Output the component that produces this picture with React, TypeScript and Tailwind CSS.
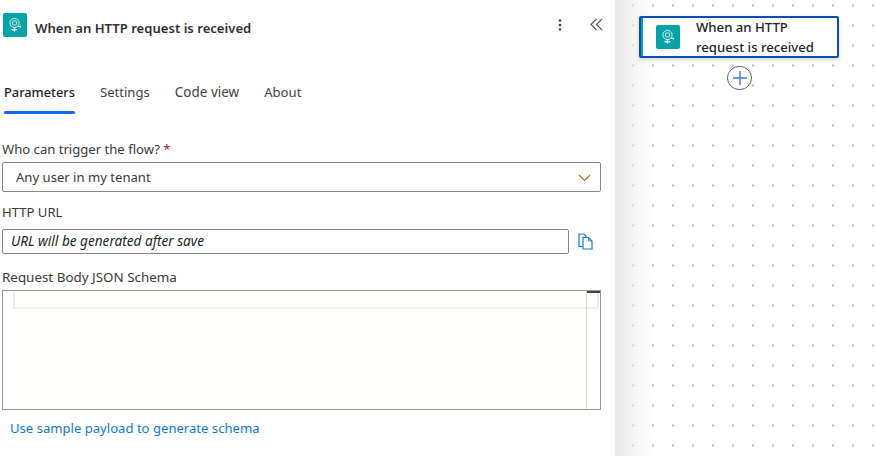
function TriggerIcon({ className }: { className: string }) {
  return (
    <div className={`flex items-center justify-center rounded-[2px] bg-[#04a3a7] ${className}`}>
      <svg width="16" height="16" viewBox="0 0 16 16" fill="none" stroke="#d8f2f2" strokeWidth="1">
        <circle cx="7.5" cy="6" r="4.6" />
        <rect x="5.6" y="4" width="3.8" height="4" rx="0.6" />
        <path d="M10.5 9.5h3.5M12.8 8.4l1.3 1.1-1.3 1.1" />
        <path d="M7.5 10.5v4M4.5 12.8h6" strokeWidth="1.4" />
      </svg>
    </div>
  );
}

function Tab({ label, active, wide }: { label: string; active?: boolean; wide?: boolean }) {
  return (
    <div className={`relative h-[46px] pt-[14px] leading-[20px] ${active ? "text-[12.8px] font-medium text-[#242424]" : wide ? "text-[13.5px] text-[#424242]" : "text-[13.1px] text-[#424242]"}`}>
      {label}
      {active && <div className="absolute bottom-0 left-0 right-0 h-[3px] rounded-[2px] bg-[#0f6cf0]" />}
    </div>
  );
}

export default function App() {
  return (
    <div className="flex h-[456px] w-[875px] overflow-hidden bg-white font-['Noto_Sans','Open_Sans',sans-serif] text-[13.1px] text-[#3b3a39]">
      <div className="flex w-[615px] shrink-0 flex-col">
        <div className="flex h-[50px] items-start pl-[3px] pr-[12px] pt-[13px]">
          <TriggerIcon className="h-[24px] w-[24px] shrink-0" />
          <div className="ml-[8px] mt-[4px] flex-1 text-[13.1px] font-semibold leading-[22px] text-[#323130]">When an HTTP request is received</div>
          <svg className="mt-[5px]" width="4" height="14" viewBox="0 0 4 14" fill="#424242">
            <circle cx="2" cy="2.5" r="1.3" />
            <circle cx="2" cy="7" r="1.3" />
            <circle cx="2" cy="11.5" r="1.3" />
          </svg>
          <svg className="ml-[28px] mt-[5px]" width="13" height="13" viewBox="0 0 13 13" fill="none" stroke="#555555" strokeWidth="1.1">
            <path d="M6.5 1 1 6.5 6.5 12" />
            <path d="M12 1 6.5 6.5 12 12" />
          </svg>
        </div>

        <div className="mt-[18px] flex gap-[25px] pl-[4px]">
          <Tab label="Parameters" active />
          <Tab label="Settings" />
          <Tab label="Code view" wide />
          <Tab label="About" />
        </div>

        <div className="mt-[24px] pl-[2px] pr-[14px]">
          <div className="h-[24px] leading-[22px]">
            Who can trigger the flow? <span className="text-[#a4262c]">*</span>
          </div>
          <div className="flex h-[30px] items-center justify-between rounded-[2px] border border-[#8a8886] pl-[13px] pr-[9px] pt-[2px]">
            <span>Any user in my tenant</span>
            <svg width="13" height="8" viewBox="0 0 13 8" fill="none" strokeWidth="1.1">
              <path d="M1 1l5.5 5.5L12 1" stroke="#b5692a" />
            </svg>
          </div>

          <div className="mt-[10px] h-[27px] leading-[20px]">HTTP URL</div>
          <div className="flex items-center">
            <div className="flex h-[25px] w-[567px] items-center rounded-[2px] border border-[#8a8886] pl-[8px] text-[13.6px] italic text-[#201f1e]">
              URL will be generated after save
            </div>
            <svg className="ml-[9px]" width="15" height="17" viewBox="0 0 15 17" fill="none" stroke="#0f78d4" strokeWidth="1.2">
              <path d="M5 13.5H1V1h5l2 2v1" />
              <path d="M5 4.5h5.5l3.5 3.5v8H5z" />
              <path d="M10.5 4.5V8H14" strokeWidth="0.8" />
            </svg>
          </div>

          <div className="mt-[12px] h-[24px] text-[13.4px] leading-[22px]">Request Body JSON Schema</div>
          <div className="relative h-[120px] border border-[#969696] bg-[#fffffd]">
            <div className="ml-[10px] mr-px h-[18px] border-x-2 border-b-2 border-[#efefec]" />
            <div className="absolute bottom-0 right-[13px] top-0 w-px bg-[#d8d8d4]" />
            <div className="absolute right-0 top-0 h-[2px] w-[13px] bg-[#444444]" />
          </div>
          <div className="mt-[8px] pl-[8px] leading-[20px] text-[#0f78d4]">Use sample payload to generate schema</div>
        </div>
      </div>

      <div className="w-[2px] shrink-0 bg-[#ececec]" />

      <div className="relative flex-1 bg-white bg-[radial-gradient(1.2px_0.7px,#bdbdbd_99%,transparent)] bg-[size:20px_20px] bg-[position:6px_-4.5px]">
        <div className="absolute inset-y-0 left-0 w-[36px] bg-[linear-gradient(90deg,#e9e9e9,rgba(255,255,255,0))]" />
        <div className="absolute left-[22px] top-[16px] flex h-[42px] w-[200px] items-center rounded-[2px] border-[2px] border-[#0a4fb0] bg-white shadow-[0_2px_4px_rgba(0,0,0,0.15)]">
          <div className="absolute inset-y-0 left-0 w-[2px] bg-[#04a3a7]" />
          <TriggerIcon className="ml-[15px] h-[24px] w-[24px] shrink-0" />
          <div className="ml-[16px] text-[13.15px] font-medium leading-[20px] text-[#242424]">
            When an HTTP<br />request is received
          </div>
        </div>
        <div className="absolute left-[110px] top-[66px] flex h-[24px] w-[25px] items-center justify-center rounded-full border border-[#616161] bg-white">
          <svg width="14" height="14" viewBox="0 0 14 14" stroke="#2f7de1" strokeWidth="1.4"><path d="M7 0v14M0 7h14" /></svg>
        </div>
      </div>
    </div>
  );
}
